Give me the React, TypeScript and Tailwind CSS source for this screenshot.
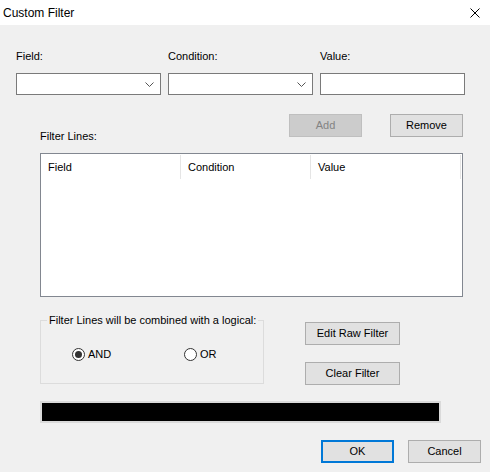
const font = "font-['Liberation_Sans',Arial,sans-serif]";

const Chevron = () => (
  <svg width="9" height="5" viewBox="0 0 9 5" className="mr-[6px]">
    <polyline points="0.5,0.5 4.5,4.5 8.5,0.5" fill="none" stroke="#555" strokeWidth="1" />
  </svg>
);

const Combo = () => (
  <div className="h-[22px] border border-[#7a7a7a] bg-white flex items-center justify-end">
    <Chevron />
  </div>
);

const Btn = ({ label, disabled = false, primary = false, w = "w-[73px]" }: { label: string; disabled?: boolean; primary?: boolean; w?: string }) => (
  <div
    className={`${w} h-[23px] flex items-center justify-center text-[11px] ${
      disabled
        ? "bg-[#cccccc] border border-[#bfbfbf] text-[#838383]"
        : primary
        ? "bg-[#e1e1e1] border-2 border-[#0078d7] text-black"
        : "bg-[#e1e1e1] border border-[#adadad] text-black"
    }`}
  >
    {label}
  </div>
);

const Radio = ({ label, checked }: { label: string; checked?: boolean }) => (
  <div className="flex items-center gap-[3px]">
    <span className="w-[13px] h-[13px] rounded-full border border-[#333] bg-white flex items-center justify-center">
      {checked && <span className="w-[7px] h-[7px] rounded-full bg-[#333]" />}
    </span>
    <span>{label}</span>
  </div>
);

export default function App() {
  return (
    <div className={`w-[490px] h-[472px] bg-[#f0f0f0] flex flex-col text-[11px] text-black ${font}`}>
      <div className="h-[25px] bg-white flex items-center justify-between pl-[3px] pr-[10px]">
        <span className="text-[12px]">Custom Filter</span>
        <svg width="10" height="10" viewBox="0 0 10 10">
          <path d="M0.5 0.5 L9.5 9.5 M9.5 0.5 L0.5 9.5" stroke="#000" strokeWidth="1" />
        </svg>
      </div>

      <div className="pl-[16px] mt-[25px] grid grid-cols-[145px_145px_145px] gap-x-[7px] gap-y-[10px]">
        <span className="leading-[13px]">Field:</span>
        <span className="leading-[13px]">Condition:</span>
        <span className="leading-[13px]">Value:</span>
        <Combo />
        <Combo />
        <div className="h-[22px] border border-[#7a7a7a] bg-white" />
      </div>

      <div className="ml-[40px] w-[423px] mt-[19px] flex justify-between items-start">
        <span className="mt-[16px] leading-[13px]">Filter Lines:</span>
        <div className="flex gap-[28px]">
          <Btn label="Add" disabled />
          <Btn label="Remove" />
        </div>
      </div>

      <div className="ml-[40px] mt-[10px] w-[423px] h-[144px] border border-[#828790] bg-white">
        <div className="flex h-[24px] mt-[1px]">
          <div className="w-[140px] border-r border-[#e5e5e5] pl-[7px] flex items-center">Field</div>
          <div className="w-[130px] border-r border-[#e5e5e5] pl-[7px] flex items-center">Condition</div>
          <div className="w-[150px] border-r border-[#e5e5e5] pl-[7px] flex items-center">Value</div>
        </div>
      </div>

      <div className="ml-[40px] mt-[23px] flex items-start gap-[41px]">
        <fieldset className="w-[224px] h-[70px] border border-[#dcdcdc] -mt-[6px]">
          <legend className="ml-[6px] px-[2px] leading-[13px]">Filter Lines will be combined with a logical:</legend>
          <div className="flex mt-[19px]">
            <div className="ml-[31px] w-[112px]">
              <Radio label="AND" checked />
            </div>
            <Radio label="OR" />
          </div>
        </fieldset>
        <div className="flex flex-col gap-[17px] mt-[2px]">
          <Btn label="Edit Raw Filter" w="w-[95px]" />
          <Btn label="Clear Filter" w="w-[95px]" />
        </div>
      </div>

      <div className="ml-[40px] mt-[16px] w-[401px] h-[22px] border-2 border-[#dadada] bg-black" />

      <div className="mt-[17px] flex justify-end gap-[14px] pr-[9px]">
        <Btn label="OK" primary />
        <Btn label="Cancel" />
      </div>
    </div>
  );
}
